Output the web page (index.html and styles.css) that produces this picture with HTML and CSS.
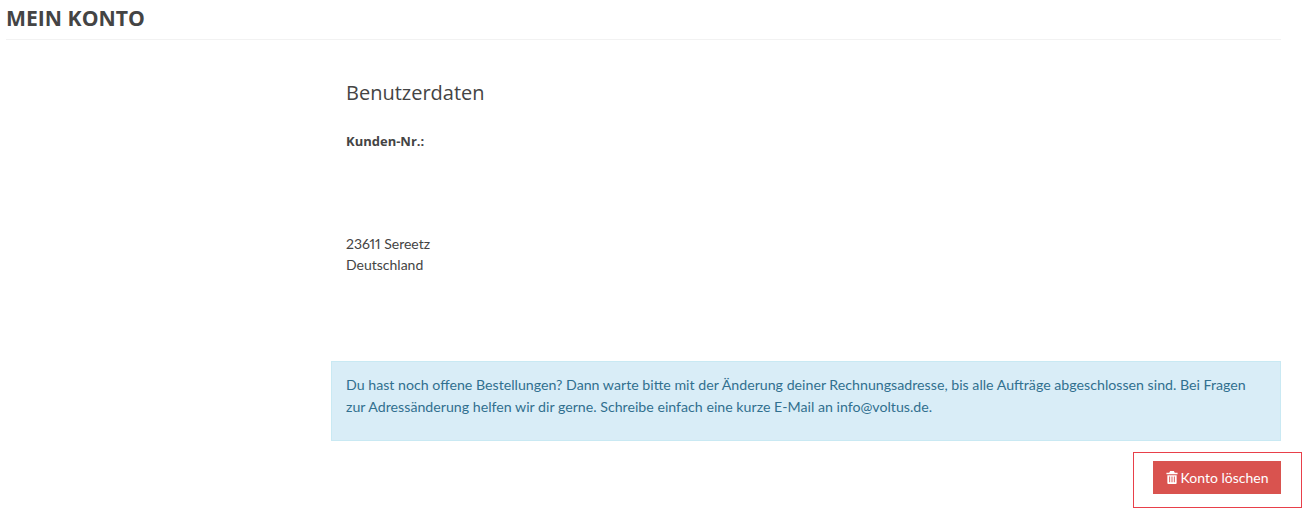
FILE: index.html
```html
<!DOCTYPE html>
<html lang="de">
<head>
  <meta charset="UTF-8" />
  <title>Mein Konto</title>
  <meta name="viewport" content="width=device-width, initial-scale=1.0" />
  <link rel="stylesheet" href="styles.css">
</head>
<body>
  <div class="container">
    <h1 class="page-title">MEIN KONTO</h1>
    <div class="content">
      <div class="user-data">
        <h2>Benutzerdaten</h2>
        <p class="kunden-nr">Kunden-Nr.:</p>
        <p class="adresse">23611 Sereetz<br />Deutschland</p>
      </div>
      <div class="alert">Du hast noch offene Bestellungen? Dann warte bitte mit der Änderung deiner Rechnungsadresse, bis alle Aufträge abgeschlossen sind. Bei Fragen zur Adressänderung helfen wir dir gerne. Schreibe einfach eine kurze E-Mail an info@voltus.de.</div>
      <div class="actions">
        <div class="highlight">
          <button class="btn-delete" type="button">
            <svg class="icon" viewBox="0 0 12 14" aria-hidden="true">
              <path fill="currentColor" fill-rule="evenodd" d="M4 0h4l1 2h3v1.5H0V2h3zM1 4.5h10V13a1 1 0 0 1-1 1H2a1 1 0 0 1-1-1zM3 6v6h1V6zm2.5 0v6h1V6zM8 6v6h1V6z"/>
            </svg>
            Konto löschen
          </button>
        </div>
      </div>
    </div>
  </div>
</body>
</html>
```

FILE: styles.css
```css
body {
  font-family: 'Lato', 'Open Sans', sans-serif;
  background-color: #fff;
  margin: 0;
  padding: 0;
  color: #444;
  font-size: 14px;
  line-height: 21px;
  font-variant-numeric: proportional-nums;
}
.container {
  width: 1275px;
  margin-left: 6px;
}
.page-title {
  font-family: 'Open Sans', sans-serif;
  font-size: 21.2px;
  font-weight: 700;
  line-height: 28px;
  margin: 0;
  padding: 4px 0 7px;
  color: #444;
  border-bottom: 1px solid #f2f2f2;
}
.content {
  margin-left: 325px;
}
.user-data {
  padding: 0 15px;
  height: 321px;
}
.user-data h2 {
  font-family: 'Open Sans', sans-serif;
  font-size: 20px;
  font-weight: 400;
  line-height: 28px;
  margin: 0;
  padding-top: 39px;
}
.kunden-nr {
  font-family: 'Open Sans', sans-serif;
  font-size: 13px;
  font-weight: 700;
  margin: 0;
  padding-top: 24px;
}
.adresse {
  margin: 0;
  padding-top: 81px;
}
.alert {
  height: 80px;
  box-sizing: border-box;
  padding: 12px 14px;
  background: #d9edf7;
  border: 1px solid #c9e9f3;
  color: #31708f;
  font-size: 14.2px;
  line-height: 22px;
}
.actions {
  display: flex;
  justify-content: flex-end;
  margin: 11px -21px 0 0;
}
.highlight {
  padding: 8px 20px 13px 19px;
  border: 1px solid #e8404a;
}
.btn-delete {
  display: flex;
  align-items: center;
  justify-content: center;
  gap: 3px;
  width: 128px;
  height: 33px;
  padding: 0;
  background: #d9534f;
  border: 1px solid #d9534f;
  color: #fff;
  font: inherit;
}
.icon {
  width: 12px;
  height: 13px;
}
```
